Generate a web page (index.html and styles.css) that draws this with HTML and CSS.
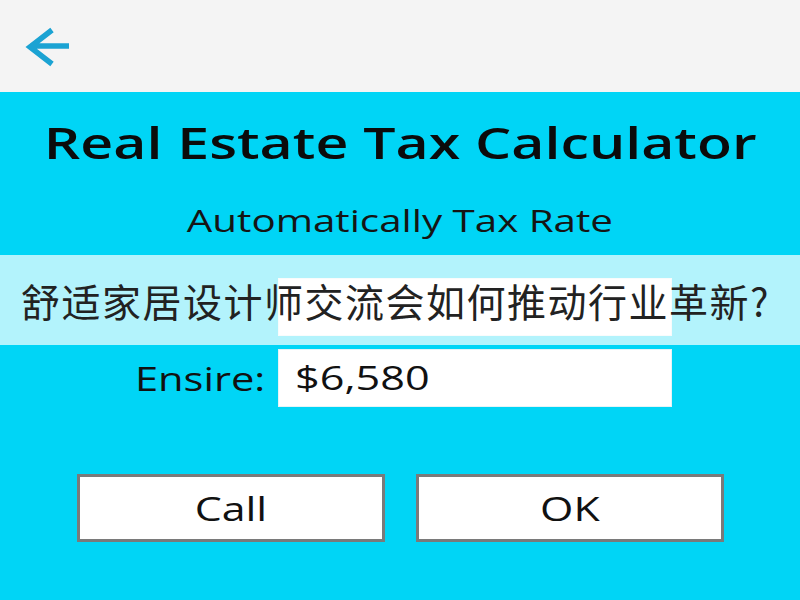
FILE: index.html
```html
<!DOCTYPE html>
<html lang="zh-CN">
<head>
  <meta charset="UTF-8">
  <meta name="viewport" content="width=device-width, initial-scale=1.0">
  <title>Real Estate Tax Calculator</title>
  <link rel="stylesheet" href="styles.css">
</head>
<body>
  <header class="top-bar">
    <button class="back-btn" aria-label="Back">
      <svg width="48" height="40" viewBox="0 0 48 40">
        <path d="M44 19 H5 M27 3 L5 20 L27 37" fill="none" stroke="#1ba3d3" stroke-width="5.5" stroke-linejoin="miter"/>
      </svg>
    </button>
  </header>

  <main class="calculator">
    <h1><span class="wide">Real Estate Tax Calculator</span></h1>
    <p class="subtitle"><span class="wide">Automatically Tax Rate</span></p>

    <div class="field">
      <span class="field-label"></span>
      <div class="field-input"></div>
    </div>

    <div class="field">
      <span class="field-label"><span class="wide">Ensire:</span></span>
      <div class="field-input"><span class="wide">$6,580</span></div>
    </div>

    <div class="actions">
      <button class="action-btn"><span class="wide">Call</span></button>
      <button class="action-btn"><span class="wide">OK</span></button>
    </div>
  </main>

  <!-- Headline banner over the form -->
  <div class="banner">舒适家居设计师交流会如何推动行业革新?</div>
</body>
</html>
```

FILE: styles.css
```css
/* General Styles */
body {
  margin: 0;
  width: 800px;
  height: 600px;
  overflow: hidden;
  background: #00d5f6;
  font-family: 'Open Sans', 'Noto Sans', sans-serif;
  color: #111;
  position: relative;
}

/* the app's type is drawn wider than the font's own proportions */
.wide {
  display: inline-block;
  transform: scaleX(1.3);
  transform-origin: center;
}

.top-bar {
  height: 92px;
  background: #f4f4f4;
  display: flex;
  align-items: center;
  padding-left: 25px;
}

.back-btn {
  background: none;
  border: none;
  padding: 0;
  margin-top: 2px;
  display: flex;
}

.calculator {
  display: flex;
  flex-direction: column;
  align-items: center;
}

h1 {
  margin: 20px 0 0;
  font-size: 44px;
  font-weight: 600;
  line-height: 60px;
  color: #0b0b0b;
}

h1 .wide {
  transform: scaleX(1.3);
}

.subtitle {
  margin: 28px 0 0;
  font-size: 31px;
  line-height: 40px;
  color: #151515;
}

.field {
  display: flex;
  align-items: center;
  width: 800px;
  margin-top: 13px;
}

.field:first-of-type {
  margin-top: 38px;
}

.field-label {
  width: 278px;
  padding-right: 13px;
  box-sizing: border-box;
  text-align: right;
  font-size: 32px;
  color: #111;
}

.field-label .wide {
  transform-origin: right;
}

.field-input {
  width: 394px;
  height: 58px;
  box-sizing: border-box;
  background: #fff;
  border: 1px solid #e6f3f6;
  padding-left: 16px;
  font-size: 32px;
  line-height: 56px;
  color: #111;
}

.field-input .wide {
  transform: scaleX(1.35);
  transform-origin: left;
}

.actions {
  display: flex;
  gap: 31px;
  margin-top: 67px;
}

.action-btn {
  width: 308px;
  height: 68px;
  background: #fff;
  border: 3px solid #7a7a7a;
  font-family: 'Open Sans', 'Noto Sans', sans-serif;
  font-size: 33px;
  color: #111;
  padding: 0;
}

/* Banner */
.banner {
  position: absolute;
  left: 0;
  top: 255px;
  width: 800px;
  height: 90px;
  background: rgba(255, 255, 255, 0.7);
  display: flex;
  align-items: center;
  padding-left: 21px;
  box-sizing: border-box;
  font-family: 'Noto Sans CJK SC', sans-serif;
  font-size: 39px;
  letter-spacing: 1.5px;
  color: #222;
}
```
